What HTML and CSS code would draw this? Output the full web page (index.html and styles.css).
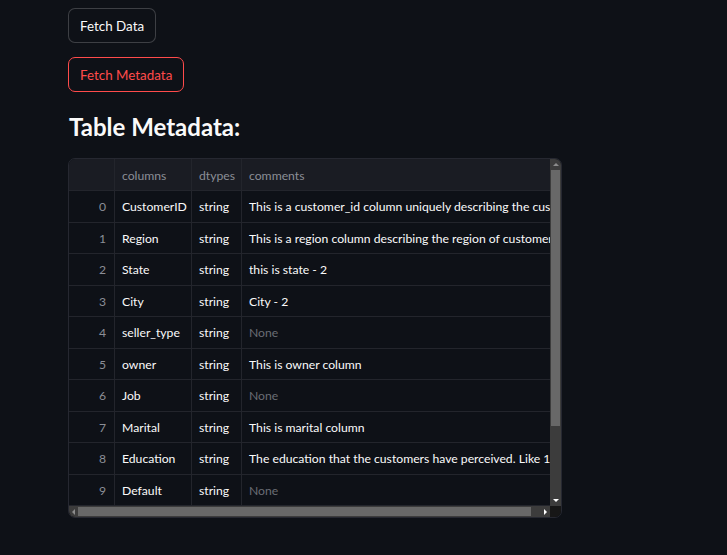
FILE: index.html
```html
<!DOCTYPE html>
<html>
<head>
<meta charset="utf-8">
<link rel="stylesheet" href="styles.css">
</head>
<body>
<main class="main">
  <div class="btn-row"><button class="btn">Fetch Data</button></div>
  <div class="btn-row"><button class="btn btn-focus">Fetch Metadata</button></div>
  <h3 class="title">Table Metadata:</h3>
  <div class="frame">
    <div class="viewport">
      <div class="row head">
        <div class="cell idx"></div>
        <div class="cell c1">columns</div>
        <div class="cell c2">dtypes</div>
        <div class="cell c3">comments</div>
      </div>
      <div class="row"><div class="cell idx">0</div><div class="cell c1">CustomerID</div><div class="cell c2">string</div><div class="cell c3">This is a customer_id column uniquely describing the cust</div></div>
      <div class="row"><div class="cell idx">1</div><div class="cell c1">Region</div><div class="cell c2">string</div><div class="cell c3">This is a region column describing the region of customers</div></div>
      <div class="row"><div class="cell idx">2</div><div class="cell c1">State</div><div class="cell c2">string</div><div class="cell c3">this is state - 2</div></div>
      <div class="row"><div class="cell idx">3</div><div class="cell c1">City</div><div class="cell c2">string</div><div class="cell c3">City - 2</div></div>
      <div class="row"><div class="cell idx">4</div><div class="cell c1">seller_type</div><div class="cell c2">string</div><div class="cell c3 none">None</div></div>
      <div class="row"><div class="cell idx">5</div><div class="cell c1">owner</div><div class="cell c2">string</div><div class="cell c3">This is owner column</div></div>
      <div class="row"><div class="cell idx">6</div><div class="cell c1">Job</div><div class="cell c2">string</div><div class="cell c3 none">None</div></div>
      <div class="row"><div class="cell idx">7</div><div class="cell c1">Marital</div><div class="cell c2">string</div><div class="cell c3">This is marital column</div></div>
      <div class="row"><div class="cell idx">8</div><div class="cell c1">Education</div><div class="cell c2">string</div><div class="cell c3">The education that the customers have perceived. Like 12</div></div>
      <div class="row"><div class="cell idx">9</div><div class="cell c1">Default</div><div class="cell c2">string</div><div class="cell c3 none">None</div></div>
    </div>
    <div class="vbar">
      <div class="arrow up"></div>
      <div class="vtrack"><div class="vthumb"></div></div>
      <div class="arrow down"></div>
    </div>
    <div class="hbar">
      <div class="arrow left"></div>
      <div class="htrack"><div class="hthumb"></div></div>
      <div class="arrow right"></div>
    </div>
    <div class="corner"></div>
  </div>
</main>
</body>
</html>
```

FILE: styles.css
```css
html, body {
  margin: 0;
  padding: 0;
  background: #0e1117;
}
body {
  font-family: Lato, "Noto Sans", sans-serif;
  color: #fafafa;
}
.main {
  padding: 8px 0 0 68px;
  width: 500px;
}
.btn-row {
  display: flex;
  margin-bottom: 14px;
}
.btn {
  font-family: Lato, sans-serif;
  font-size: 13.4px;
  height: 35px;
  padding: 0 11px;
  border: 1px solid rgba(250, 250, 250, 0.2);
  border-radius: 7px;
  background: #0e1117;
  color: #fafafa;
}
.btn-focus {
  border-color: #ff4b4b;
  color: #ff4b4b;
}
.title {
  margin: 16px 0 12px 1px;
  font-size: 24px;
  font-weight: 700;
  line-height: 38px;
  height: 38px;
}
.frame {
  width: 494px;
  height: 360px;
  box-sizing: border-box;
  border: 1px solid #262831;
  border-radius: 7px;
  overflow: hidden;
  display: grid;
  grid-template-columns: 1fr 11px;
  grid-template-rows: 1fr 11px;
}
.viewport {
  overflow: hidden;
  display: flex;
  flex-direction: column;
}
.row {
  display: flex;
  flex: none;
  height: 31.5px;
  box-sizing: border-box;
  border-bottom: 1px solid #23252c;
  font-size: 12.2px;
}
.row.head {
  height: 32px;
  background: #1a1c23;
  color: #8b8e96;
}
.cell {
  flex: none;
  box-sizing: border-box;
  border-right: 1px solid #23252c;
  display: flex;
  align-items: center;
  padding: 1px 7px 0;
  white-space: nowrap;
  overflow: hidden;
}
.head .cell {
  padding-top: 2px;
}
.idx {
  width: 46px;
  justify-content: flex-end;
  color: #8b8e96;
  padding-right: 8px;
}
.c1 { width: 77px; }
.c2 { width: 50px; }
.c3 { width: 600px; border-right: none; }
.none { color: #6a6d74; }

.vbar {
  background: #3c3c3c;
  display: flex;
  flex-direction: column;
  align-items: center;
}
.vtrack {
  flex: 1;
  width: 100%;
  display: flex;
  flex-direction: column;
  padding: 0 1px;
  box-sizing: border-box;
}
.vthumb {
  margin-top: 1px;
  height: 256px;
  background: #686868;
}
.hbar {
  background: #3c3c3c;
  display: flex;
  align-items: center;
}
.htrack {
  flex: 1;
  height: 100%;
  display: flex;
  align-items: center;
  padding: 1px 0;
  box-sizing: border-box;
}
.hthumb {
  width: 453px;
  height: 100%;
  background: #686868;
}
.corner {
  background: #171717;
}
.arrow {
  flex: none;
  width: 0;
  height: 0;
  border-style: solid;
}
.up {
  margin: 4px 0 3px;
  border-width: 0 3px 3px 3px;
  border-color: transparent transparent #8c8c8c transparent;
}
.down {
  margin: 3px 0 4px;
  border-width: 3px 3px 0 3px;
  border-color: #ffffff transparent transparent transparent;
}
.left {
  margin: 0 3px 0 3px;
  border-width: 3px 3px 3px 0;
  border-color: transparent #8c8c8c transparent transparent;
}
.right {
  margin: 0 3px 0 4px;
  border-width: 3px 0 3px 3px;
  border-color: transparent transparent transparent #ffffff;
}
```
